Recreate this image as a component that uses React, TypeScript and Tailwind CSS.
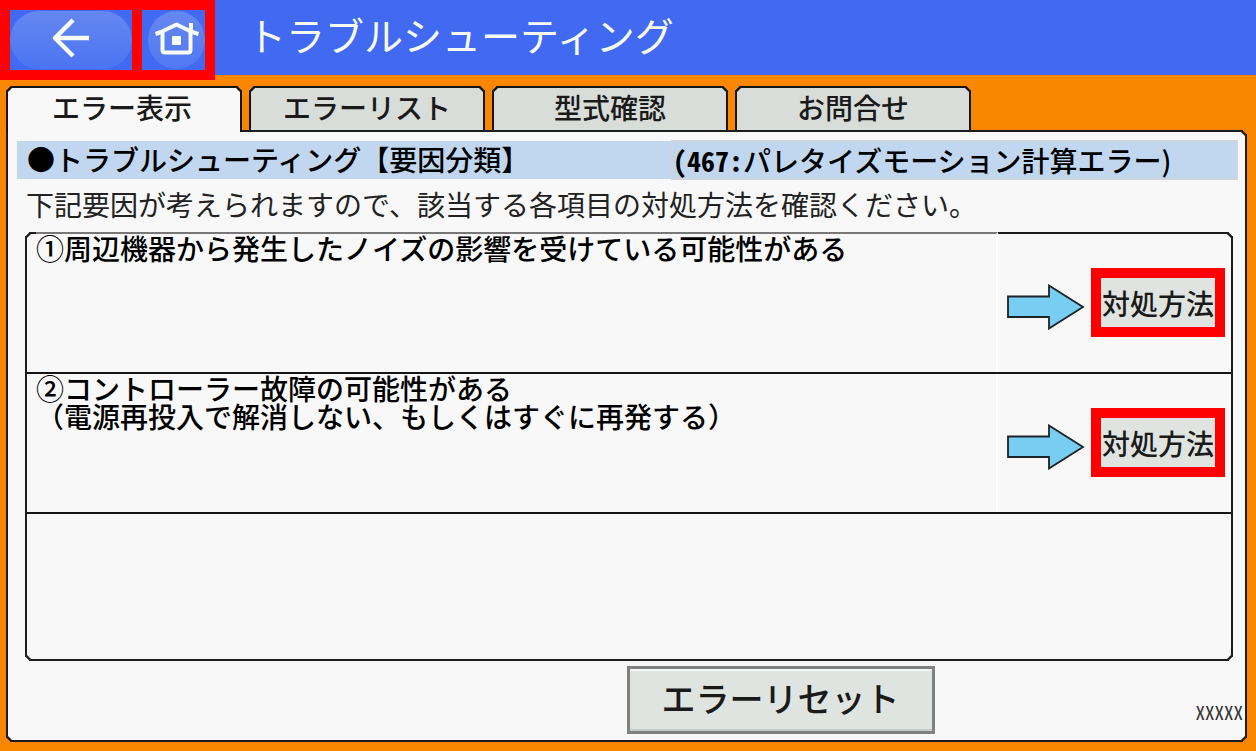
import React from "react";

const tabs = ["エラー表示", "エラーリスト", "型式確認", "お問合せ"];

const causes = [
  { id: 1, lines: ["①周辺機器から発生したノイズの影響を受けている可能性がある"] },
  {
    id: 2,
    lines: ["②コントローラー故障の可能性がある", "（電源再投入で解消しない、もしくはすぐに再発する）"],
  },
];

function BackIcon() {
  return (
    <svg width="40" height="40" viewBox="0 0 40 40" fill="none" stroke="#f8faf4" strokeWidth="4.500" className="-mt-1" aria-hidden="true">
      <path d="M22 2 L4 20 L22 38 M4 20 H38" strokeLinejoin="round" />
    </svg>
  );
}

function HomeIcon() {
  return (
    <svg width="46" height="34" viewBox="0 0 46 34" fill="none" stroke="#f8faf4" strokeWidth="4" className="-mt-1" aria-hidden="true">
      <path d="M1.500 13 L7 11 L22.500 3.500 L38 11 L44.500 13" strokeLinejoin="round" />
      <path d="M8.500 11 V29 Q8.500 31.500 11 31.500 H34 Q36.500 31.500 36.500 29 V11" />
      <path d="M37 2 V11" />
      <rect x="18" y="15" width="9" height="9" rx="1" fill="#f8faf4" stroke="none" />
    </svg>
  );
}

function ArrowIcon() {
  return (
    <svg width="78" height="46" viewBox="0 0 78 46" className="mt-2 shrink-0" aria-hidden="true">
      <path d="M1 12.500 H42 V1.500 L76 23 L42 44.500 V33 H1 Z" fill="#78cdf2" stroke="#1c2226" strokeWidth="1.800" />
    </svg>
  );
}

function CauseRow({ lines }: { lines: string[] }) {
  return (
    <li className="group flex border-b-2 border-[#151515]">
      <div className="ml-[9px] flex-1 border-r-2 border-r-white group-first:-mt-0.5 group-first:border-t-2 group-first:border-t-[#777]">
        {lines.map((line) => (
          <p key={line} className="text-[28px] leading-7 font-medium text-black">
            {line}
          </p>
        ))}
      </div>
      <div className="flex items-center gap-1.5 pt-[34px] pr-1.5 pb-[35px] pl-[9px]">
        <ArrowIcon />
        <button
          type="button"
          className="h-[69px] w-[134px] border-10 border-[#ff0000] bg-[#e0e4e0] text-[28px] leading-none font-medium whitespace-nowrap text-[#1a1a1a]"
        >
          <span className="-mx-1">対処方法</span>
        </button>
      </div>
    </li>
  );
}

export default function App() {
  return (
    <div className="flex min-h-screen flex-col bg-[#fb8600] font-['Noto_Sans_CJK_JP',sans-serif]">
      <header className="flex h-[75px] items-start bg-[#4169f1]">
        <nav className="flex h-20 shrink-0 gap-2.5 bg-[#ff0000] p-2.5">
          <button type="button" aria-label="戻る" className="h-[60px] w-[122px] overflow-hidden bg-[#4169f1]">
            <span className="flex h-[58px] items-center justify-center rounded-full bg-linear-to-b from-[#6587f1] to-[#4b74f1]">
              <BackIcon />
            </span>
          </button>
          <button type="button" aria-label="ホーム" className="h-[60px] w-[63px] overflow-hidden bg-[#4169f1] pl-1.5">
            <span className="flex h-[58px] items-center justify-center rounded-full bg-linear-to-b from-[#6587f1] to-[#5078f1]">
              <HomeIcon />
            </span>
          </button>
        </nav>
        <h1 className="pl-8 text-[39px] leading-[68px] text-[#f8faf4]">トラブルシューティング</h1>
      </header>

      <main className="flex flex-1 flex-col px-[9px] pt-[11px] pb-[9px] pl-1.5">
        <div role="tablist" className="flex gap-[7px]">
          {tabs.map((label, i) => (
            <button
              key={label}
              type="button"
              role="tab"
              aria-selected={i === 0}
              className={
                i === 0
                  ? "relative z-10 -mb-0.5 h-[46px] w-[236px] rounded-t-[5px] border-2 border-b-0 border-[#151515] bg-[#f8f8f8] pr-1 pb-1.5 text-[28px] leading-none font-medium text-[#1a1a1a] [corner-shape:bevel]"
                  : "h-[44px] w-[236px] rounded-t-[5px] border-2 border-b-0 border-[#151515] bg-[#d9ddd9] pb-1 text-[28px] leading-none font-medium text-[#1a1a1a] [corner-shape:bevel]"
              }
            >
              {label}
            </button>
          ))}
        </div>

        <section className="flex flex-1 flex-col rounded-[5px] rounded-tl-none border-2 border-[#1c1c1c] bg-[#f8f8f8] [corner-shape:bevel]">
          <h2 className="mr-[7px] ml-[9px] mt-2 flex text-[28px] leading-9 font-medium text-black">
            <span className="my-px w-[654px] bg-[#c0d7ef] pl-2.5">●トラブルシューティング【要因分類】</span>
            <span className="flex-1 border-2 border-[#d0d5da] bg-[#c0d7ef]">
              <span className="font-['Noto_Sans_Mono_CJK_JP','Noto_Sans_CJK_JP',sans-serif] font-bold">(467:</span>
              パレタイズモーション計算エラー)
            </span>
          </h2>
          <p className="mt-1 pl-[18px] text-[28px] leading-10 text-[#222]">
            下記要因が考えられますので、該当する各項目の対処方法を確認ください。
          </p>

          <ul className="mt-2 mr-3 ml-[17px] flex-1 rounded-[5px] border-2 border-[#1c1c1c] [corner-shape:bevel]">
            {causes.map((cause) => (
              <CauseRow key={cause.id} lines={cause.lines} />
            ))}
          </ul>

          <footer className="grid grid-cols-2 pt-[5px] pb-1.5">
            <button
              type="button"
              className="col-start-2 row-start-1 h-[68px] w-[308px] border-3 border-[#808080] bg-[#e0e4e0] pb-1 text-[34px] leading-none font-medium text-[#1a1a1a] shadow-[inset_0_2px_0_#f4f6f4,inset_0_-2px_0_#c8ccc8]"
            >
              エラーリセット
            </button>
            <span className="col-start-2 row-start-1 mb-2.5 self-end justify-self-end pr-0.5 font-['Noto_Sans_Mono_CJK_JP','Noto_Sans',sans-serif] text-[19px] leading-6 text-[#333]">
              XXXXX
            </span>
          </footer>
        </section>
      </main>
    </div>
  );
}
